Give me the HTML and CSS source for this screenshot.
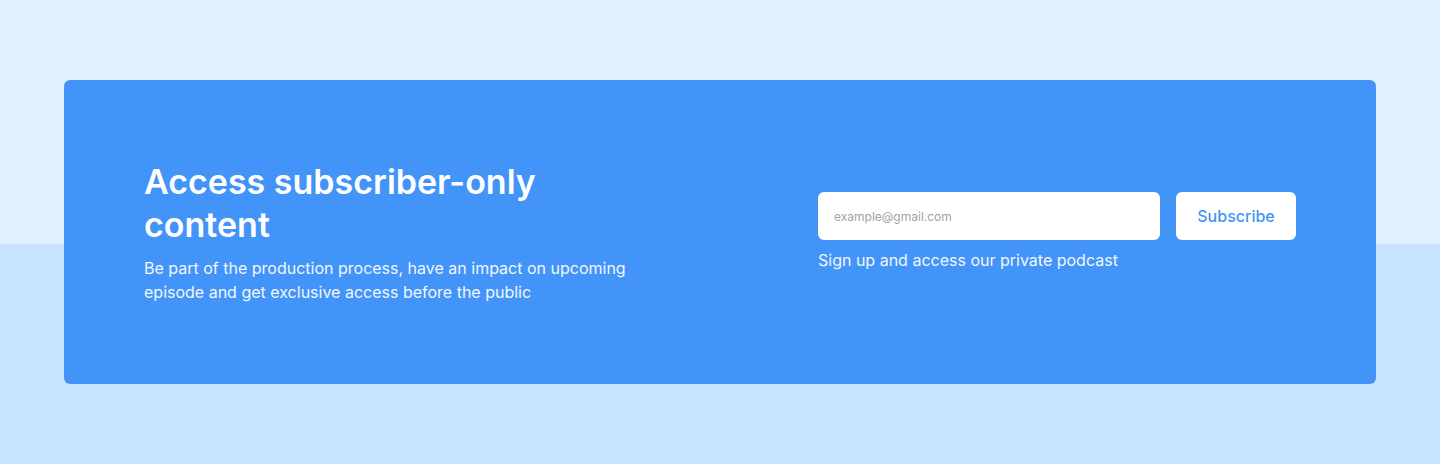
FILE: index.html
```html
<!DOCTYPE html>
<html lang="en">
<head>
<meta charset="utf-8">
<title>Subscribe</title>
<link rel="stylesheet" href="styles.css">
</head>
<body>
<div class="page">
  <section class="cta">
    <div class="cta-text">
      <h2 class="cta-title">Access subscriber-only content</h2>
      <p class="cta-desc">Be part of the production process, have an impact on upcoming episode and get exclusive access before the public</p>
    </div>
    <div class="cta-form">
      <form class="form-row" onsubmit="return false;">
        <input class="email" type="email" placeholder="example@gmail.com">
        <button class="btn" type="submit">Subscribe</button>
      </form>
      <p class="form-note">Sign up and access our private podcast</p>
    </div>
  </section>
</div>
</body>
</html>
```
FILE: styles.css
```css
* { box-sizing: border-box; }
html, body { margin: 0; padding: 0; }
body {
  font-family: Inter, "Noto Sans", sans-serif;
  background: linear-gradient(to bottom, #e1f0ff 0, #e1f0ff 244px, #c9e4ff 244px, #c9e4ff 100%);
  min-height: 464px;
}
.page {
  padding: 80px 64px;
}
.cta {
  background: #4294f8;
  border-radius: 6px;
  height: 304px;
  padding: 0 80px;
  display: flex;
  align-items: center;
  justify-content: space-between;
}
.cta-text {
  width: 490px;
}
.cta-title {
  margin: 0;
  color: #fff;
  font-size: 34px;
  line-height: 43px;
  font-weight: 600;
  letter-spacing: 0;
  width: 440px;
}
.cta-desc {
  margin: 10px 0 0;
  color: #f2f7ff;
  font-size: 16px;
  line-height: 24px;
}
.cta-form {
  width: 478px;
}
.form-row {
  display: flex;
  gap: 16px;
  margin: 0;
}
.email {
  width: 342px;
  height: 48px;
  border: none;
  border-radius: 6px;
  background: #fff;
  padding: 0 16px;
  font-family: Inter, "Noto Sans", sans-serif;
  font-size: 12px;
  color: #333;
  outline: none;
}
.email::placeholder { color: #a3a3a3; }
.btn {
  width: 120px;
  height: 48px;
  border: none;
  border-radius: 6px;
  background: #fff;
  color: #4294f8;
  font-family: Inter, "Noto Sans", sans-serif;
  font-size: 16px;
  font-weight: 500;
  cursor: pointer;
}
.form-note {
  margin: 8px 0 0;
  color: #f2f7ff;
  font-size: 16px;
  line-height: 24px;
}
```
